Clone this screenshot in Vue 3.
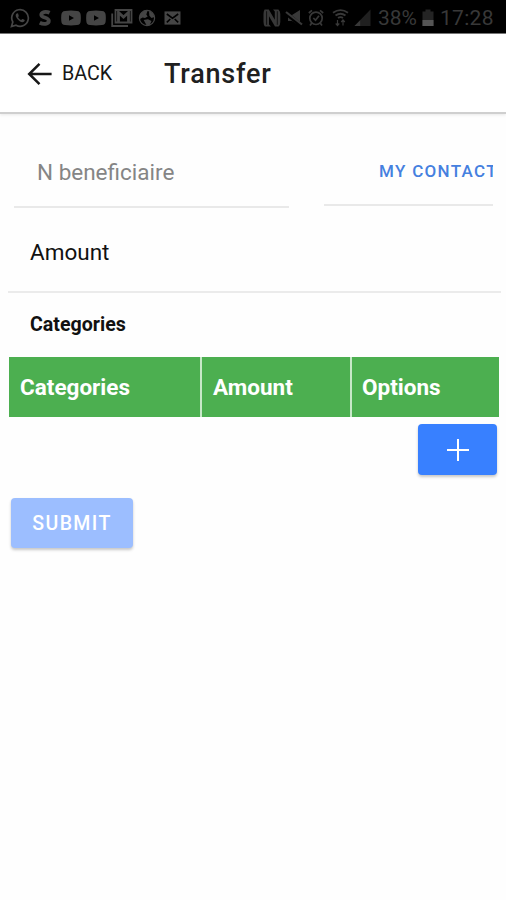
<script setup>
import { ref } from 'vue'

const columns = ['Categories', 'Amount', 'Options']
const beneficiary = ref('')
</script>

<template>
  <div class="screen">
    <div class="status">
      <div class="notifications">
        <svg width="20" height="20" viewBox="0 0 20 20" fill="none" stroke="currentColor">
          <path d="M1.5 18.5 L2.8 14 A8.3 8.3 0 1 1 6 17.2 Z" stroke-width="1.7" />
          <path d="M7.1 5.2 C5 6.3 5.4 8.6 7.6 11.2 C10.2 14 12.3 15.3 14.4 13.3 C15 12.4 14.7 12 13.8 11.5 L12.4 10.9 L11.1 12 C9.5 11.4 8.7 10.4 8 9.2 L8.8 8 L8.1 5.6 Z" fill="currentColor" stroke="none" />
        </svg>
        <svg class="skype" width="12" height="20" viewBox="0 0 12 20" fill="none" stroke="currentColor" stroke-width="3.8">
          <path d="M10.6 4.8 C7 3 2.2 3.8 2.3 7 C2.4 10 9.8 9 9.8 12.8 C9.8 16.4 4.4 16.7 .8 14.8" />
        </svg>
        <svg v-for="n in 2" :key="n" class="video" width="20" height="20" viewBox="0 0 20 20" fill="currentColor">
          <path fill-rule="evenodd" d="M4 2.9 Q10 2.3 16 2.9 Q19.5 3.1 19.7 7 Q20 10 19.7 13 Q19.5 16.9 16 17.1 Q10 17.7 4 17.1 Q.5 16.9 .3 13 Q0 10 .3 7 Q.5 3.1 4 2.9 Z M8 7.2 V12.8 L13 10 Z" />
        </svg>
        <svg class="gmail" width="22" height="20" viewBox="0 0 22 20" fill="none" stroke="currentColor" stroke-width="1.8">
          <path d="M1.2 5.5 V18 H17 M4.5 2 V14.5 H20.5 V2 Z" />
          <path d="M7.5 14 V4.5 L12.5 9 L17.5 4.5 V14" stroke-width="2.8" />
        </svg>
        <svg class="globe" width="18" height="20" viewBox="0 0 18 20">
          <circle cx="9" cy="10" r="7.6" fill="none" stroke="currentColor" stroke-width="1.2" />
          <path d="M2 6 L6 2.8 L9.5 3 L8.3 6.4 L9.7 8.5 L7 10 L4.6 9.5 L2 11 Z M11 3 L14.7 5 L16.5 9 L13.5 10 L11.4 7.7 Z M5.7 12 L10 11.2 L13.5 13 L11.5 17.4 L8.8 17.8 Z" fill="currentColor" />
        </svg>
        <svg class="mail" width="17" height="20" viewBox="0 0 17 20">
          <path d="M.5 3.4 H16.5 V16.6 H.5 Z" fill="currentColor" />
          <path d="M2.8 6 L8.5 10.2 L14.2 6 M2.8 14.3 L6.3 11 M14.2 14.3 L10.7 11" fill="none" stroke="#000" stroke-width="1.6" />
        </svg>
      </div>
      <div class="system">
        <svg width="18" height="20" viewBox="0 0 18 20" fill="currentColor">
          <path d="M1.6 1.5 H5.8 L11.8 11.7 V3.6 L10 1.5 H15.4 Q17.3 3 17.3 6 V14 Q17.3 17 15.6 18.5 H12 L6 8.2 V16.4 L8 18.5 H2 Q.5 17 .5 14 V6 Q.5 3 1.6 1.5 Z" />
          <path d="M3.6 3.2 V16.8 M14.3 3.2 V16.8" stroke="#000" stroke-width=".7" />
        </svg>
        <svg class="mute" width="18" height="20" viewBox="0 0 18 20">
          <path d="M3 7 H7 L15 2 V18 L7 13 H3 Z" fill="currentColor" />
          <path d="M1 5.1 L16 17.5" stroke="#000" stroke-width="4.2" />
          <path d="M1 4 L17 16.5" stroke="currentColor" stroke-width="2.2" />
        </svg>
        <svg class="alarm" width="16" height="20" viewBox="0 0 16 20" fill="none" stroke="currentColor" stroke-width="1.7">
          <circle cx="8" cy="10.3" r="6.2" />
          <path d="M5.3 10 L7.5 12.2 L11 7.8 M.8 5 L4 2.4 M12 2.4 L15.2 5 M3.8 15 L2 17.5 M12.2 15 L14 17.5" />
        </svg>
        <svg class="wifi" width="17" height="20" viewBox="0 0 17 20" fill="none" stroke="currentColor" stroke-width="1.8">
          <path d="M1 4.8 Q8.5 -.4 16 4.8 M3.5 7.5 Q8.5 4 13.5 7.5 M6 10 Q8.5 8.3 11 10" />
          <path d="M5.5 12 V17.5 M3.7 15.5 L5.5 17.5 L7.3 15.5 M11 17.5 V12 M9.2 14 L11 12 L12.8 14" stroke-width="1.2" />
        </svg>
        <svg class="signal" width="17" height="20" viewBox="0 0 17 20">
          <path d="M16.5 1.5 V18 H.5 Z" fill="#202020" />
          <path d="M6.2 12.2 V18 H.5 Z" fill="currentColor" />
        </svg>
        <span class="percent">38%</span>
        <svg class="battery" width="12" height="18" viewBox="0 0 12 18">
          <path d="M3.5 .5 H8.5 V2.4 H11.5 V17 H.5 V2.4 H3.5 Z" fill="#242424" />
          <path d="M.5 11 H11.5 V17 H.5 Z" fill="#555" />
        </svg>
        <span class="clock">17:28</span>
      </div>
    </div>

    <header class="toolbar">
      <button class="back" type="button">
        <svg width="26" height="24" viewBox="0 0 26 24" fill="none" stroke="currentColor" stroke-width="2.5">
          <path d="M12.5 1.8 L2.2 12 L12.5 22.2 M2.4 12 H24.6" />
        </svg>
        <span>BACK</span>
      </button>
      <h1>Transfer</h1>
    </header>

    <main>
      <div class="recipient">
        <input v-model="beneficiary" class="beneficiary" type="text" placeholder="N beneficiaire" />
        <div class="contact"><button type="button">MY CONTACT</button></div>
      </div>
      <div class="amount">Amount</div>
      <div class="label">Categories</div>
      <div class="table">
        <div v-for="name in columns" :key="name" class="cell">{{ name }}</div>
      </div>
      <button class="add" type="button">
        <svg width="24" height="24" viewBox="0 0 24 24" stroke="currentColor" stroke-width="2">
          <path d="M1 12 H23 M12 1 V23" />
        </svg>
      </button>
      <button class="submit" type="button" disabled>SUBMIT</button>
    </main>
  </div>
</template>

<style>
body { background: #fefefe; }
</style>

<style scoped>
.screen {
  box-sizing: border-box;
  width: 506px;
  height: 900px;
  overflow: hidden;
  background: #fefefe;
  color: #111;
  font-family: Roboto, "Liberation Sans", sans-serif;
}
.screen * { box-sizing: border-box; }
button { font-family: inherit; border: 0; background: none; padding: 0; margin: 0; }
svg { display: block; flex: none; }

.status {
  display: flex;
  justify-content: space-between;
  height: 34px;
  padding: 2px 12px 0 10px;
  background: #000;
  color: #454545;
  border-bottom: 1px solid #777;
}
.notifications, .system { display: flex; align-items: center; }
.skype { margin-left: 9px; }
.video { margin-left: 10px; }
.video + .video { margin-left: 5px; }
.gmail { margin-left: 5px; }
.globe { margin-left: 5px; }
.mail { margin-left: 8px; }
.system { color: #383838; }
.mute { margin-left: 4px; }
.alarm { margin-left: 5px; }
.wifi { margin-left: 8px; }
.signal { margin-left: 5px; }
.percent { width: 51px; padding-left: 7px; font-size: 21px; white-space: nowrap; }
.clock { width: 54px; margin-left: 6px; font-size: 21px; white-space: nowrap; letter-spacing: .3px; }

.toolbar {
  display: flex;
  align-items: center;
  height: 80px;
  padding: 1px 27px 0;
  background: #fff;
  border-bottom: 2px solid #cfcfcf;
  box-shadow: 0 1px 3px rgba(0, 0, 0, .09);
}
.back { display: flex; align-items: center; width: 137px; color: #171717; font-size: 19.7px; }
.back span { margin-left: 9px; }
h1 { margin: 0; color: #202020; font-size: 27px; line-height: 32px; font-weight: 500; letter-spacing: .8px; }

main { display: flex; flex-direction: column; }
.recipient { display: flex; align-items: flex-start; gap: 35px; padding: 22px 13px 0 14px; }
.beneficiary {
  width: 275px;
  height: 72px;
  padding: 1px 0 0 23px;
  border: 0;
  border-bottom: 2px solid #e9e9e9;
  border-radius: 0;
  outline: 0;
  background: none;
  font: 400 22.5px Roboto, "Liberation Sans", sans-serif;
}
.beneficiary::placeholder { color: #858585; opacity: 1; }
.contact {
  display: flex;
  align-items: center;
  width: 169px;
  height: 70px;
  padding: 1px 0 0 55px;
  border-bottom: 2px solid #e9e9e9;
  overflow: hidden;
}
.contact button { flex: none; color: #4580df; font-size: 17px; font-weight: 500; letter-spacing: 1.3px; }
.amount {
  height: 85px;
  margin: 0 5px 0 8px;
  padding: 30px 22px 0;
  border-bottom: 2px solid #ebebeb;
  font-size: 22.5px;
  line-height: 28px;
}
.label { height: 64px; padding: 20px 30px 0; font-size: 19.6px; line-height: 24px; font-weight: 700; }
.table {
  display: grid;
  grid-template-columns: 191px 148px 147px;
  gap: 2px;
  width: 490px;
  height: 60px;
  margin-left: 9px;
  background: #c7e8c8;
}
.cell { display: flex; align-items: center; padding-left: 11px; background: #4caf50; color: #fff; font-size: 22.5px; font-weight: 700; }
.cell:last-child { padding-left: 10px; }
.add, .submit {
  display: flex;
  align-items: center;
  justify-content: center;
  border-radius: 4px;
  color: #fff;
  box-shadow: 0 2px 3px rgba(0, 0, 0, .22);
}
.add { align-self: flex-end; width: 79px; height: 51px; margin: 7px 9px 0 0; background: #3880ff; }
.submit { width: 122px; height: 50px; margin: 23px 0 0 11px; background: #9cbeff; font-size: 19.5px; font-weight: 500; letter-spacing: 1.4px; }
</style>
